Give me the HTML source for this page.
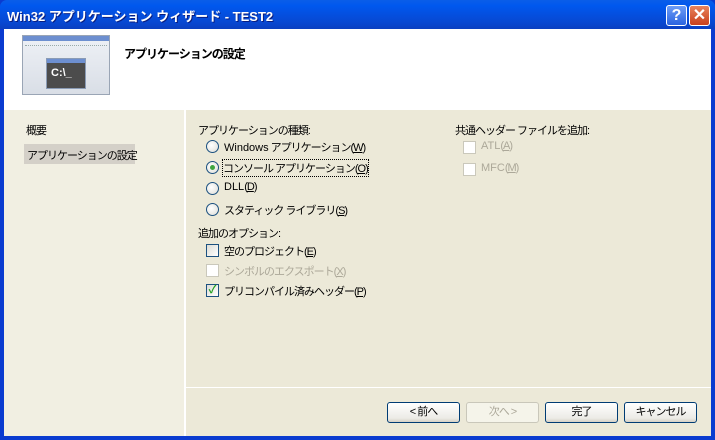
<!DOCTYPE html>
<html><head><meta charset="utf-8"><style>
*{margin:0;padding:0;box-sizing:border-box}
body{width:715px;height:440px;overflow:hidden;position:relative;background:#0A3BD0;font-family:"Liberation Sans","Noto Sans CJK JP",sans-serif;font-size:11px;letter-spacing:-1px;color:#000}
.a{position:absolute;white-space:nowrap}
.l{letter-spacing:0}
#title{left:0;top:0;width:715px;height:29px;background:linear-gradient(#0A5EE8,#0058EE 20%,#0847D0 80%,#0A3FC0);border-radius:7px 7px 0 0}
#tt{left:7px;top:6px;color:#fff;font-weight:bold;font-size:13px;letter-spacing:0;text-shadow:1px 1px #0a1e80}
.tb{top:5px;width:21px;height:21px;border:1px solid #fff;border-radius:3px;color:#fff;font-weight:bold;text-align:center;font-size:16px;line-height:19px;letter-spacing:0}
#hdr{left:4px;top:29px;width:707px;height:81px;background:#fff}
#lp{left:4px;top:110px;width:182px;height:326px;background:#F1EFE2;border-right:2px solid #fff}
#rp{left:186px;top:110px;width:525px;height:326px;background:#ECE9D8}
#hl{left:186px;top:387px;width:525px;height:1px;background:#fff}
.rb{width:13px;height:13px;border:1px solid #1c5180;border-radius:50%;background:radial-gradient(circle at 40% 40%,#fff,#dcdcd6)}
.cb{width:13px;height:13px;border:1px solid #1c5180;background:linear-gradient(135deg,#dcdcd6,#fff)}
.dis{color:#aca899}
.cbd{width:13px;height:13px;border:1px solid #cac8bb;background:#fff}
.btn{top:402px;height:21px;width:73px;border:1px solid #003c74;border-radius:3px;background:linear-gradient(#fff,#ecebe6 80%,#d6d0c5);text-align:center;line-height:19px}
</style></head><body>
<div class="a" id="title"></div>
<div class="a" id="tt">Win32 アプリケーション ウィザード - TEST2</div>
<div class="a tb" style="left:666px;background:linear-gradient(#6d9cf6,#2a63e0)">?</div>
<div class="a tb" style="left:689px;background:linear-gradient(#e8835c,#c9401c)">✕</div>
<div class="a" id="hdr"></div>
<div class="a" style="left:22px;top:35px;width:88px;height:60px;border:1px solid #9aa5b5;background:linear-gradient(#eef1f6,#d9dee6)">
 <div class="a" style="left:0;top:0;width:86px;height:5px;background:#6d8fd0"></div>
 <div class="a" style="left:2px;top:7px;width:82px;height:3px;border-bottom:1px dotted #9aa"></div>
 <div class="a" style="left:23px;top:22px;width:40px;height:31px;background:#4c4c4c;border:1px solid #8a9bb5"><div style="height:4px;background:#6d8fd0"></div><span style="color:#fff;font-weight:bold;font-size:11px;letter-spacing:0;position:absolute;left:4px;top:8px">C:\_</span></div>
</div>
<div class="a" style="left:124px;top:45px;font-weight:bold;font-size:12px">アプリケーションの設定</div>
<div class="a" id="lp"></div>
<div class="a" id="rp"></div>
<div class="a" id="hl"></div>
<div class="a" style="left:26px;top:122px">概要</div>
<div class="a" style="left:24px;top:144px;width:111px;height:20px;background:#d4d0c8;padding:3px 3px">アプリケーションの設定</div>
<div class="a" style="left:198px;top:122px">アプリケーションの種類:</div>
<div class="a rb" style="left:206px;top:140px"></div><div class="a" style="left:224px;top:139px"><span class="l">Windows</span> アプリケーション(<u>W</u>)</div>
<div class="a rb" style="left:206px;top:161px"></div><div class="a" style="left:210px;top:165px;width:5px;height:5px;border-radius:50%;background:#3fa53f"></div><div class="a" style="left:223px;top:160px;outline:1px dotted #000">コンソール アプリケーション(<u>O</u>)</div>
<div class="a rb" style="left:206px;top:182px"></div><div class="a" style="left:224px;top:181px"><span class="l">DLL</span>(<u>D</u>)</div>
<div class="a rb" style="left:206px;top:203px"></div><div class="a" style="left:224px;top:202px">スタティック ライブラリ(<u>S</u>)</div>
<div class="a" style="left:198px;top:225px">追加のオプション:</div>
<div class="a cb" style="left:206px;top:244px"></div><div class="a" style="left:224px;top:243px">空のプロジェクト(<u>E</u>)</div>
<div class="a cbd" style="left:206px;top:264px"></div><div class="a dis" style="left:224px;top:263px">シンボルのエクスポート(<u>X</u>)</div>
<div class="a cb" style="left:206px;top:284px;color:#21a121;font-size:11px;line-height:11px;text-align:center;font-weight:bold;letter-spacing:0">✓</div><div class="a" style="left:224px;top:283px">プリコンパイル済みヘッダー(<u>P</u>)</div>
<div class="a" style="left:455px;top:122px">共通ヘッダー ファイルを追加:</div>
<div class="a cbd" style="left:463px;top:141px"></div><div class="a dis" style="left:481px;top:140px"><span class="l">ATL</span>(<u>A</u>)</div>
<div class="a cbd" style="left:463px;top:163px"></div><div class="a dis" style="left:481px;top:162px"><span class="l">MFC</span>(<u>M</u>)</div>
<div class="a btn" style="left:387px">&lt; 前へ</div>
<div class="a btn dis" style="left:466px;border-color:#c9c7ba;background:#f5f4ea">次へ &gt;</div>
<div class="a btn" style="left:545px">完了</div>
<div class="a btn" style="left:624px">キャンセル</div>
</body></html>
